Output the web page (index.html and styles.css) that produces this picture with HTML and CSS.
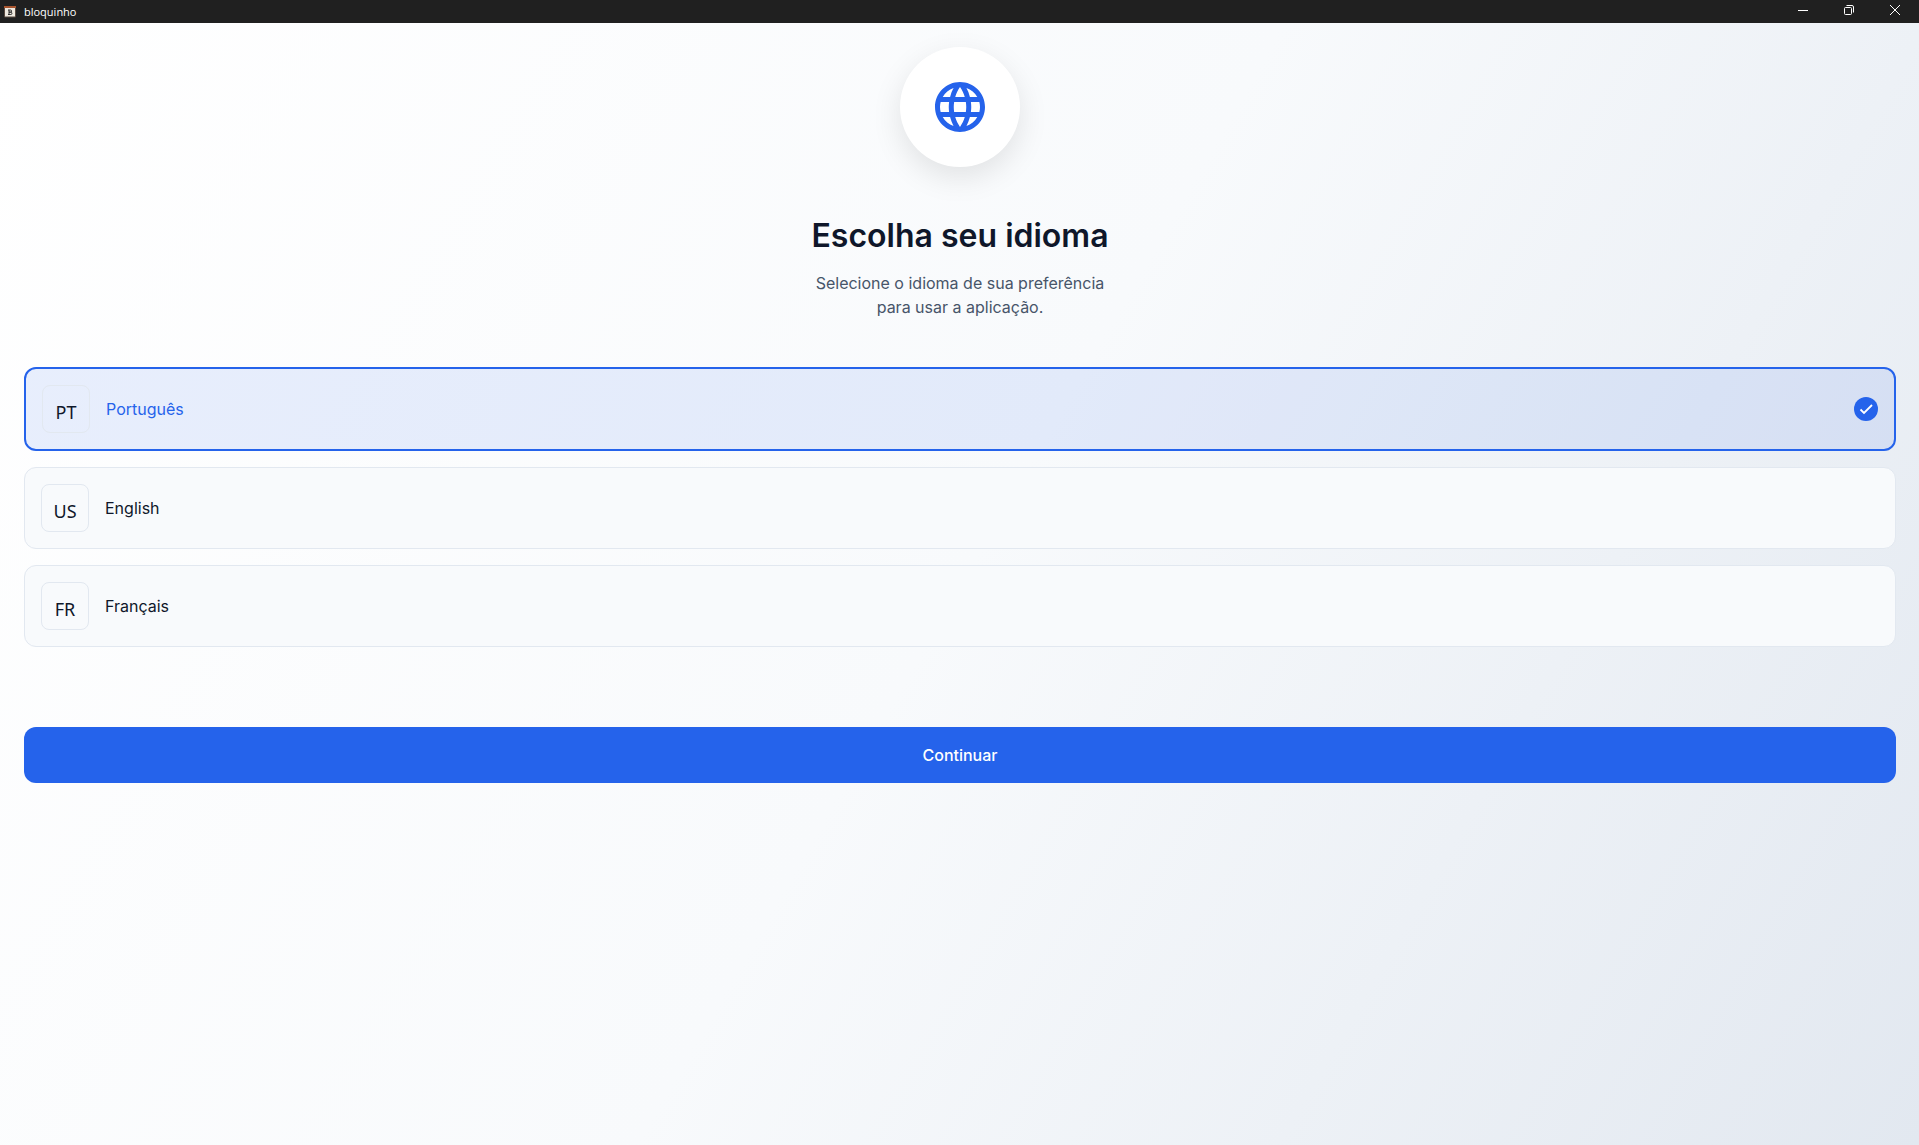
FILE: index.html
```html
<!DOCTYPE html>
<html lang="pt-BR">
<head>
<meta charset="utf-8">
<meta name="viewport" content="width=device-width, initial-scale=1">
<title>bloquinho</title>
<link rel="stylesheet" href="styles.css">
</head>
<body>
<header class="titlebar">
  <svg class="app-icon" width="12" height="12" viewBox="0 0 12 12" aria-hidden="true">
    <rect x=".5" y="1" width="11" height="10" fill="#efe9df"/>
    <path d="M.5 1v10h11V1" fill="none" stroke="#57483f" stroke-width="1"/>
    <rect x="0" y="0" width="12" height="2" fill="#a8552f"/>
    <path d="M5 4v4.500M4 4h2.500a1 1 0 0 1 0 2.200H5h1.800a1.100 1.100 0 0 1 0 2.300H4" fill="none" stroke="#2b2b2b" stroke-width="1"/>
  </svg>
  <span class="app-name">bloquinho</span>
  <div class="window-controls">
    <button type="button" class="window-button" aria-label="Minimizar">
      <svg width="10" height="10" viewBox="0 0 10 10"><path d="M0 5.500h10" stroke="#fff"/></svg>
    </button>
    <button type="button" class="window-button" aria-label="Restaurar">
      <svg width="10" height="10" viewBox="0 0 10 10" fill="none" stroke="#fff"><rect x=".5" y="2.500" width="7" height="7" rx="1"/><path d="M2.500.5H8A1.500 1.500 0 0 1 9.500 2v5.500"/></svg>
    </button>
    <button type="button" class="window-button" aria-label="Fechar">
      <svg width="10" height="10" viewBox="0 0 10 10"><path d="M0 0l10 10M10 0L0 10" stroke="#fff"/></svg>
    </button>
  </div>
</header>
<main class="page">
  <div class="hero-icon">
    <svg width="60" height="60" viewBox="0 0 24 24" fill="#2563eb" aria-hidden="true">
      <path d="M11.990 2C6.470 2 2 6.480 2 12s4.470 10 9.990 10C17.520 22 22 17.520 22 12S17.520 2 11.990 2zm6.930 6h-2.950c-.32-1.250-.78-2.450-1.380-3.560 1.840.63 3.370 1.910 4.330 3.560zM12 4.040c.83 1.200 1.480 2.530 1.910 3.960h-3.820c.43-1.430 1.080-2.760 1.910-3.960zM4.260 14C4.100 13.360 4 12.690 4 12s.1-1.360.26-2h3.380c-.08.66-.14 1.320-.14 2s.06 1.340.14 2H4.260zm.82 2h2.950c.32 1.250.78 2.450 1.380 3.560-1.840-.63-3.370-1.900-4.330-3.560zm2.950-8H5.080c.96-1.660 2.490-2.930 4.330-3.560C8.810 5.550 8.350 6.750 8.030 8zM12 19.960c-.83-1.200-1.480-2.530-1.910-3.960h3.820c-.43 1.430-1.080 2.760-1.910 3.960zM14.340 14H9.660c-.09-.66-.16-1.320-.16-2s.07-1.350.16-2h4.680c.09.65.16 1.320.16 2s-.07 1.340-.16 2zm.25 5.560c.6-1.110 1.060-2.310 1.380-3.560h2.950c-.96 1.650-2.490 2.930-4.330 3.560zM16.360 14c.08-.66.14-1.320.14-2s-.06-1.340-.14-2h3.380c.16.640.26 1.310.26 2s-.1 1.360-.26 2h-3.380z"/>
    </svg>
  </div>
  <h1 class="title">Escolha seu idioma</h1>
  <p class="subtitle">Selecione o idioma de sua preferência<br>para usar a aplicação.</p>
  <form class="language-form">
    <div class="options" role="radiogroup" aria-label="Idioma">
      <label class="option">
        <input class="option-input" type="radio" name="language" value="pt" checked>
        <span class="option-code">PT</span>
        <span class="option-name">Português</span>
        <svg class="option-check" width="24" height="24" viewBox="0 0 24 24" aria-hidden="true"><circle cx="12" cy="12" r="12" fill="#2563eb"/><path d="M6.500 12.500l3.500 3.500 8-8" fill="none" stroke="#fff" stroke-width="1.800"/></svg>
      </label>
      <label class="option">
        <input class="option-input" type="radio" name="language" value="en">
        <span class="option-code">US</span>
        <span class="option-name">English</span>
        <svg class="option-check" width="24" height="24" viewBox="0 0 24 24" aria-hidden="true"><circle cx="12" cy="12" r="12" fill="#2563eb"/><path d="M6.500 12.500l3.500 3.500 8-8" fill="none" stroke="#fff" stroke-width="1.800"/></svg>
      </label>
      <label class="option">
        <input class="option-input" type="radio" name="language" value="fr">
        <span class="option-code">FR</span>
        <span class="option-name">Français</span>
        <svg class="option-check" width="24" height="24" viewBox="0 0 24 24" aria-hidden="true"><circle cx="12" cy="12" r="12" fill="#2563eb"/><path d="M6.500 12.500l3.500 3.500 8-8" fill="none" stroke="#fff" stroke-width="1.800"/></svg>
      </label>
    </div>
    <button type="submit" class="continue">Continuar</button>
  </form>
</main>
</body>
</html>
```
FILE: styles.css
```css
* {
  box-sizing: border-box;
}

body {
  margin: 0;
  min-height: 100vh;
  display: flex;
  flex-direction: column;
  font-family: Inter, "Liberation Sans", sans-serif;
  font-size: 16px;
  line-height: 24px;
  color: #0f172a;
}

.titlebar {
  display: flex;
  align-items: center;
  height: 23px;
  padding: 0 1px 0 4px;
  background: #202020;
  color: #fff;
}

.app-name {
  margin-left: 8px;
  font-family: "Open Sans", sans-serif;
  font-size: 11px;
  line-height: 23px;
}

.window-controls {
  display: flex;
  height: 100%;
  margin-left: auto;
}

.window-button {
  display: flex;
  align-items: center;
  justify-content: center;
  width: 46px;
  padding: 0 0 3px;
  border: 0;
  background: none;
}

.page {
  flex: 1;
  display: flex;
  flex-direction: column;
  align-items: center;
  padding: 24px 23px 24px 24px;
  background: linear-gradient(120deg, #fff, #f8fafc 50%, #e2e8f0);
}

.hero-icon {
  display: flex;
  align-items: center;
  justify-content: center;
  width: 120px;
  height: 120px;
  border-radius: 50%;
  background: #fff;
  box-shadow: 0 10px 30px rgba(0, 0, 0, 0.1);
}

.title {
  margin: 48px 0 14px;
  font-size: 32px;
  font-weight: 600;
  line-height: 42px;
  text-align: center;
}

.subtitle {
  margin: 0 0 48px;
  color: #475569;
  text-align: center;
}

.language-form {
  align-self: stretch;
}

.options {
  display: flex;
  flex-direction: column;
  gap: 16px;
}

.option {
  display: flex;
  align-items: center;
  gap: 16px;
  padding: 16px;
  border: 1px solid #e2e8f0;
  border-radius: 12px;
  background: #f8fafc;
  cursor: pointer;
}

.option:has(.option-input:checked) {
  border: 2px solid #2563eb;
  background: rgba(37, 99, 235, 0.1);
  color: #2563eb;
}

.option:has(.option-input:focus-visible) {
  outline: 2px solid #93c5fd;
}

.option-input {
  position: absolute;
  opacity: 0;
}

.option-code {
  width: 48px;
  height: 48px;
  padding-top: 6px;
  border: 1px solid #e2e8f0;
  border-radius: 8px;
  font-family: "Noto Sans", sans-serif;
  font-size: 18px;
  line-height: 40px;
  color: #0f172a;
  text-align: center;
}

.option-check {
  display: none;
  margin-left: auto;
}

.option-input:checked ~ .option-check {
  display: block;
}

.continue {
  display: block;
  width: 100%;
  height: 56px;
  margin-top: 80px;
  padding: 0;
  border: 0;
  border-radius: 12px;
  background: #2563eb;
  color: #fff;
  font: 500 16px/24px Inter, "Liberation Sans", sans-serif;
  cursor: pointer;
}
```
